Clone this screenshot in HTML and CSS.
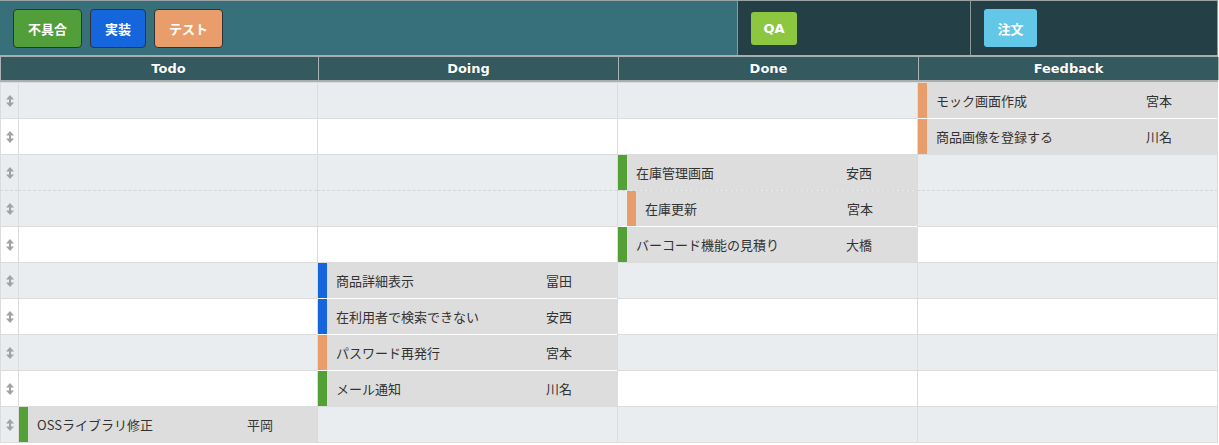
FILE: index.html
```html
<!DOCTYPE html>
<html lang="ja">
<head>
<meta charset="utf-8">
<title>Board</title>
<link rel="stylesheet" href="styles.css">
</head>
<body>
<div class="board">
  <div class="topbar">
    <div class="section main">
      <button class="tag big green">不具合</button>
      <button class="tag big blue">実装</button>
      <button class="tag big orange">テスト</button>
    </div>
    <div class="section dark qa-sec">
      <button class="tag qa">QA</button>
    </div>
    <div class="section dark order-sec">
      <button class="tag order">注文</button>
    </div>
  </div>

  <div class="colhead">
    <div class="ch handle-h"></div>
    <div class="ch first">Todo</div>
    <div class="ch">Doing</div>
    <div class="ch">Done</div>
    <div class="ch">Feedback</div>
  </div>

  <div class="rows">
    <div class="row gray">
      <div class="cell handle"><svg class="grip" viewBox="0 0 8 12" width="8" height="12"><path d="M0 4.5 L4 0 L8 4.5 Z M0 7.5 L4 12 L8 7.5 Z"/><rect x="3" y="3" width="2" height="6"/></svg></div>
      <div class="cell"></div><div class="cell"></div><div class="cell"></div>
      <div class="cell last"><div class="card c-orange"><span class="title">モック画面作成</span><span class="who">宮本</span></div></div>
    </div>
    <div class="row">
      <div class="cell handle"><svg class="grip" viewBox="0 0 8 12" width="8" height="12"><path d="M0 4.5 L4 0 L8 4.5 Z M0 7.5 L4 12 L8 7.5 Z"/><rect x="3" y="3" width="2" height="6"/></svg></div>
      <div class="cell"></div><div class="cell"></div><div class="cell"></div>
      <div class="cell last follow"><div class="card c-orange"><span class="title">商品画像を登録する</span><span class="who">川名</span></div></div>
    </div>
    <div class="row gray">
      <div class="cell handle"><svg class="grip" viewBox="0 0 8 12" width="8" height="12"><path d="M0 4.5 L4 0 L8 4.5 Z M0 7.5 L4 12 L8 7.5 Z"/><rect x="3" y="3" width="2" height="6"/></svg></div>
      <div class="cell"></div><div class="cell"></div>
      <div class="cell"><div class="card c-green"><span class="title">在庫管理画面</span><span class="who">安西</span></div></div>
      <div class="cell last"></div>
    </div>
    <div class="row gray dashed">
      <div class="cell handle"><svg class="grip" viewBox="0 0 8 12" width="8" height="12"><path d="M0 4.5 L4 0 L8 4.5 Z M0 7.5 L4 12 L8 7.5 Z"/><rect x="3" y="3" width="2" height="6"/></svg></div>
      <div class="cell"></div><div class="cell"></div>
      <div class="cell"><div class="card sub c-orange"><span class="title">在庫更新</span><span class="who">宮本</span></div></div>
      <div class="cell last"></div>
    </div>
    <div class="row">
      <div class="cell handle"><svg class="grip" viewBox="0 0 8 12" width="8" height="12"><path d="M0 4.5 L4 0 L8 4.5 Z M0 7.5 L4 12 L8 7.5 Z"/><rect x="3" y="3" width="2" height="6"/></svg></div>
      <div class="cell"></div><div class="cell"></div>
      <div class="cell follow"><div class="card c-green"><span class="title">バーコード機能の見積り</span><span class="who">大橋</span></div></div>
      <div class="cell last"></div>
    </div>
    <div class="row gray">
      <div class="cell handle"><svg class="grip" viewBox="0 0 8 12" width="8" height="12"><path d="M0 4.5 L4 0 L8 4.5 Z M0 7.5 L4 12 L8 7.5 Z"/><rect x="3" y="3" width="2" height="6"/></svg></div>
      <div class="cell"></div>
      <div class="cell"><div class="card c-blue"><span class="title">商品詳細表示</span><span class="who">冨田</span></div></div>
      <div class="cell"></div><div class="cell last"></div>
    </div>
    <div class="row">
      <div class="cell handle"><svg class="grip" viewBox="0 0 8 12" width="8" height="12"><path d="M0 4.5 L4 0 L8 4.5 Z M0 7.5 L4 12 L8 7.5 Z"/><rect x="3" y="3" width="2" height="6"/></svg></div>
      <div class="cell"></div>
      <div class="cell follow"><div class="card c-blue"><span class="title">在利用者で検索できない</span><span class="who">安西</span></div></div>
      <div class="cell"></div><div class="cell last"></div>
    </div>
    <div class="row gray">
      <div class="cell handle"><svg class="grip" viewBox="0 0 8 12" width="8" height="12"><path d="M0 4.5 L4 0 L8 4.5 Z M0 7.5 L4 12 L8 7.5 Z"/><rect x="3" y="3" width="2" height="6"/></svg></div>
      <div class="cell"></div>
      <div class="cell follow"><div class="card c-orange"><span class="title">パスワード再発行</span><span class="who">宮本</span></div></div>
      <div class="cell"></div><div class="cell last"></div>
    </div>
    <div class="row">
      <div class="cell handle"><svg class="grip" viewBox="0 0 8 12" width="8" height="12"><path d="M0 4.5 L4 0 L8 4.5 Z M0 7.5 L4 12 L8 7.5 Z"/><rect x="3" y="3" width="2" height="6"/></svg></div>
      <div class="cell"></div>
      <div class="cell follow"><div class="card c-green"><span class="title">メール通知</span><span class="who">川名</span></div></div>
      <div class="cell"></div><div class="cell last"></div>
    </div>
    <div class="row gray lastrow">
      <div class="cell handle"><svg class="grip" viewBox="0 0 8 12" width="8" height="12"><path d="M0 4.5 L4 0 L8 4.5 Z M0 7.5 L4 12 L8 7.5 Z"/><rect x="3" y="3" width="2" height="6"/></svg></div>
      <div class="cell"><div class="card c-green"><span class="title">OSSライブラリ修正</span><span class="who">平岡</span></div></div>
      <div class="cell"></div><div class="cell"></div><div class="cell last"></div>
    </div>
  </div>
</div>
</body>
</html>
```

FILE: styles.css
```css
* { box-sizing: border-box; }
html, body { margin: 0; padding: 0; background: #fff; }
body { font-family: "Noto Sans CJK JP", "DejaVu Sans", sans-serif; }

.board { width: 1218px; }

/* top bar */
.topbar {
  display: flex;
  height: 57px;
  border-top: 1px solid #9aa3a5;
  border-bottom: 2px solid #a9aeaf;
}
.section { display: flex; align-items: center; height: 100%; }
.main { width: 737px; background: #376f7b; padding-left: 13px; gap: 8px; }
.dark { background: #243f45; border-left: 1px solid #8d9a9c; }
.qa-sec { width: 233px; padding-left: 13px; }
.order-sec { flex: 1; padding-left: 13px; border-right: 1px solid #8d9a9c; }

.tag {
  font-family: "DejaVu Sans", "Noto Sans CJK JP", sans-serif;
  font-weight: bold;
  font-size: 13px;
  color: #fff;
  border: none;
  border-radius: 3px;
  padding: 0 14px;
  margin: 0;
}
.tag.big {
  height: 39px;
  border: 1px solid #2f3334;
  border-radius: 4px;
  font-family: "Noto Sans CJK JP", sans-serif;
}
.green { background: #529e3a; }
.blue { background: #1565dd; }
.orange { background: #e99d6a; }
.qa { background: #8dc63f; height: 33px; width: 46px; padding: 0; }
.order { background: #63c7e8; height: 38px; width: 53px; padding: 0; font-family: "Noto Sans CJK JP", sans-serif; }

/* column header */
.colhead {
  display: grid;
  grid-template-columns: 18px 299px 300px 300px 301px;
  height: 25px;
  background: #345a60;
  border-bottom: 2px solid #a9aeaf;
  border-left: 1px solid #a7b3b5;
}
.ch {
  color: #fff;
  font-family: "DejaVu Sans", sans-serif;
  font-weight: bold;
  font-size: 13px;
  text-align: center;
  line-height: 23px;
  text-shadow: 0 0 1px #1f3538;
  border-left: 1px solid #a7b3b5;
}
.ch.handle-h, .ch.first { border-left: none; }
.ch:last-child { border-right: 1px solid #a7b3b5; }

/* rows */
.rows { border-bottom: 1px solid #dcdcdc; }
.row {
  display: grid;
  grid-template-columns: 18px 299px 300px 300px 301px;
  height: 36px;
  background: #fff;
}
.row.gray { background: #e9edf0; }
.cell {
  border-top: 1px solid #dcdcdc;
  border-left: 1px solid #dcdcdc;
  display: flex;
  align-items: stretch;
}
.cell.last { border-right: 1px solid #dcdcdc; }
.row.dashed .cell { border-top: 1px dashed #d4d6d8; }
.cell.follow { border-top-color: #fff; }
.handle { align-items: center; justify-content: center; }
.grip { fill: #a0a2a4; display: block; }

.card {
  flex: 1;
  display: flex;
  align-items: center;
  background: #dddddd;
  border-left: 9px solid #888;
  padding-left: 9px;
  font-size: 13px;
  color: #333;
}
.card.sub { margin-left: 9px; }
.c-green { border-left-color: #52a036; }
.c-blue { border-left-color: #1565dd; }
.c-orange { border-left-color: #e99d6a; }
.title { width: 210px; flex: none; white-space: nowrap; }
.card.sub .title { width: 202px; }
.who { white-space: nowrap; }
```
